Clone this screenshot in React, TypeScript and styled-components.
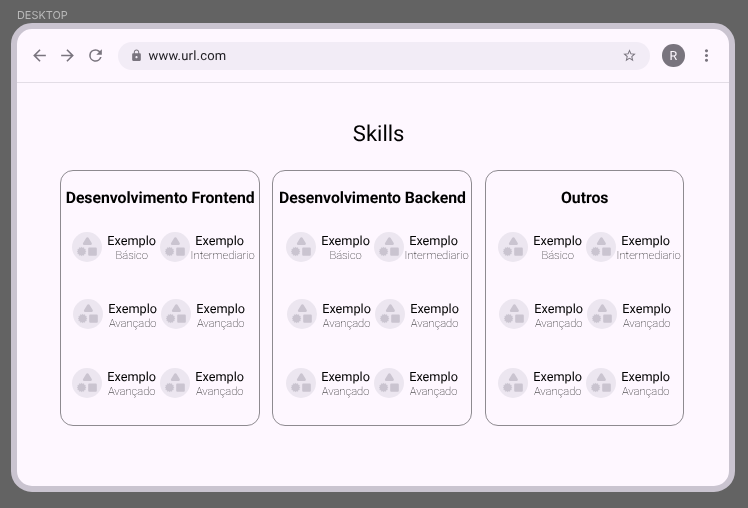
import React from "react";
import styled, { createGlobalStyle } from "styled-components";

const GlobalStyle = createGlobalStyle`
  * { box-sizing: border-box; }
  body {
    margin: 0;
    background: #636363;
    font-family: Roboto, "Liberation Sans", sans-serif;
    text-rendering: geometricPrecision;
    overflow: hidden;
  }
`;

const Canvas = styled.div`
  width: 748px;
  height: 508px;
  padding-left: 11px;
  background: #636363;
`;

const FrameLabel = styled.div`
  height: 23px;
  padding: 8px 0 0 6px;
  font: 400 10.9px/15px Inter, sans-serif;
  color: #bababa;
  will-change: transform;
`;

const BrowserWindow = styled.div`
  width: 723.7px;
  height: 468.7px;
  border: 6px solid #cac4d0;
  border-radius: 21px;
  background: #fef7ff;
  overflow: hidden;
`;

const Toolbar = styled.header`
  display: flex;
  align-items: center;
  height: 54px;
  padding-left: 12.5px;
  border-bottom: 1px solid #e3dde6;
  color: #79747e;
  will-change: transform;
`;

const Glyph = styled.svg<{ $size: number; $after?: number }>`
  flex: none;
  width: ${(p) => p.$size}px;
  height: ${(p) => p.$size}px;
  margin-right: ${(p) => p.$after ?? 0}px;
  fill: currentColor;
`;

const AddressBar = styled.div`
  display: flex;
  align-items: center;
  flex: none;
  width: 532px;
  height: 28px;
  padding: 0 13px 0 12px;
  border-radius: 14px;
  background: #f2ecf6;
`;

const Url = styled.span`
  flex: 1;
  padding-top: 2px;
  font-size: 13px;
  line-height: 20px;
  letter-spacing: 0.2px;
  color: #1d1b20;
`;

const Avatar = styled.div`
  display: flex;
  align-items: center;
  justify-content: center;
  flex: none;
  width: 22.5px;
  height: 22.5px;
  margin: 0 12.2px 0 12.5px;
  padding-top: 1px;
  border-radius: 50%;
  background: #79747e;
  color: #fef7ff;
  font-size: 12.5px;
`;

const Title = styled.h1`
  margin: 38px 0 0;
  padding-left: 11.6px;
  font-size: 22px;
  line-height: 28px;
  font-weight: 400;
  text-align: center;
  color: #000;
  will-change: transform;
`;

const Columns = styled.main`
  display: flex;
  gap: 12.6px;
  margin: 21px 0 0 43.4px;
  will-change: transform;
`;

const Card = styled.section`
  flex: none;
  width: 199.7px;
  height: 256px;
  border: 1px solid #8e8a90;
  border-radius: 13px;
`;

const CardTitle = styled.h2`
  margin: 16px 0 23px;
  padding-left: 0.6px;
  font-size: 15.8px;
  line-height: 22px;
  font-weight: 700;
  letter-spacing: -0.04px;
  text-align: center;
  white-space: nowrap;
  color: #000;
`;

const SkillRow = styled.div<{ $indent: number; $after: number }>`
  display: grid;
  grid-template-columns: 88px 88px;
  height: 30px;
  margin: 0 0 ${(p) => p.$after}px ${(p) => p.$indent}px;
`;

const SkillItem = styled.div`
  display: flex;
  width: 90px;
`;

const Labels = styled.div`
  display: flex;
  flex-direction: column;
  align-items: center;
  flex: none;
  width: 60px;
  padding-top: 2.2px;
  white-space: nowrap;
`;

const Name = styled.span`
  font-size: 12.7px;
  line-height: 15px;
  color: #000;
`;

const Level = styled.span<{ $shift: number }>`
  margin: 0 -20px 0 ${(p) => p.$shift * 2 - 20}px;
  font-size: 11.2px;
  line-height: 14px;
  font-weight: 100;
  color: #000;
`;

const paths = {
  back: "M20 11H7.83l5.59-5.59L12 4l-8 8 8 8 1.41-1.41L7.83 13H20v-2z",
  forward: "M12 4l-1.41 1.41L16.17 11H4v2h12.17l-5.58 5.59L12 20l8-8z",
  refresh:
    "M17.65 6.35A7.958 7.958 0 0 0 12 4a8 8 0 1 0 7.73 10h-2.08A6 6 0 1 1 12 6c1.66 0 3.14.69 4.22 1.78L13 11h7V4l-2.35 2.35z",
  lock: "M18 8h-1V6c0-2.76-2.24-5-5-5S7 3.24 7 6v2H6c-1.1 0-2 .9-2 2v10c0 1.1.9 2 2 2h12c1.1 0 2-.9 2-2V10c0-1.1-.9-2-2-2zm-6 9c-1.1 0-2-.9-2-2s.9-2 2-2 2 .9 2 2-.9 2-2 2zm3.1-9H8.900V6c0-1.710 1.390-3.100 3.100-3.100s3.100 1.390 3.100 3.100v2z",
  star: "M22 9.24l-7.190-.62L12 2 9.190 8.630 2 9.240l5.460 4.730L5.820 21 12 17.270 18.180 21l-1.630-7.030L22 9.240zM12 15.400l-3.760 2.270 1-4.280-3.320-2.880 4.380-.38L12 6.100l1.710 4.040 4.380.38-3.320 2.880 1 4.280L12 15.400z",
  more: "M12 8c1.100 0 2-.9 2-2s-.9-2-2-2-2 .9-2 2 .9 2 2 2zm0 2c-1.100 0-2 .9-2 2s.9 2 2 2 2-.9 2-2-.9-2-2-2zm0 6c-1.100 0-2 .9-2 2s.9 2 2 2 2-.9 2-2-.9-2-2-2z",
};

function Icon({ name, size, after }: { name: keyof typeof paths; size: number; after?: number }) {
  return (
    <Glyph $size={size} $after={after} viewBox="0 0 24 24" aria-hidden>
      <path d={paths[name]} />
    </Glyph>
  );
}

const gearPoints = Array.from({ length: 24 }, (_, i) => {
  const angle = (i * Math.PI) / 12;
  const radius = i % 2 ? 3.6 : 4.6;
  return `${9.6 + radius * Math.cos(angle)},${19.5 + radius * Math.sin(angle)}`;
}).join(" ");

function ShapesIcon() {
  return (
    <Glyph $size={30} viewBox="0 0 30 30" aria-hidden>
      <circle cx="15" cy="15" r="15" fill="#ece6f0" />
      <g fill="#cac4d0" stroke="#cac4d0" strokeLinejoin="round">
        <path d="M15.400 6.500L18.600 11.700H12.200z" strokeWidth="2.600" />
        <polygon points={gearPoints} strokeWidth="0.300" />
        <rect x="17.200" y="16.400" width="6.600" height="6.400" strokeWidth="2" />
      </g>
    </Glyph>
  );
}

const rows = [
  { levels: ["Básico", "Intermediario"], offset: 0, after: 37.4 },
  { levels: ["Avançado", "Avançado"], offset: 1, after: 38.6 },
  { levels: ["Avançado", "Avançado"], offset: 0, after: 0 },
];

const areas = [
  { title: "Desenvolvimento Frontend", indent: 10.7 },
  { title: "Desenvolvimento Backend", indent: 12.3 },
  { title: "Outros", indent: 12.1 },
];

export default function App() {
  return (
    <>
      <GlobalStyle />
      <Canvas>
        <FrameLabel>DESKTOP</FrameLabel>
        <BrowserWindow>
          <Toolbar>
            <Icon name="back" size={19} after={9} />
            <Icon name="forward" size={19} after={9.5} />
            <Icon name="refresh" size={19} after={12.5} />
            <AddressBar>
              <Icon name="lock" size={13} after={6} />
              <Url>www.url.com</Url>
              <Icon name="star" size={15} />
            </AddressBar>
            <Avatar>R</Avatar>
            <Icon name="more" size={19} />
          </Toolbar>
          <Title>Skills</Title>
          <Columns>
            {areas.map((area) => (
              <Card key={area.title}>
                <CardTitle>{area.title}</CardTitle>
                {rows.map((row, r) => (
                  <SkillRow key={r} $indent={area.indent + row.offset} $after={row.after}>
                    {row.levels.map((level, i) => (
                      <SkillItem key={i}>
                        <ShapesIcon />
                        <Labels>
                          <Name>Exemplo</Name>
                          <Level $shift={level === "Intermediario" ? 3 : 0}>{level}</Level>
                        </Labels>
                      </SkillItem>
                    ))}
                  </SkillRow>
                ))}
              </Card>
            ))}
          </Columns>
        </BrowserWindow>
      </Canvas>
    </>
  );
}
